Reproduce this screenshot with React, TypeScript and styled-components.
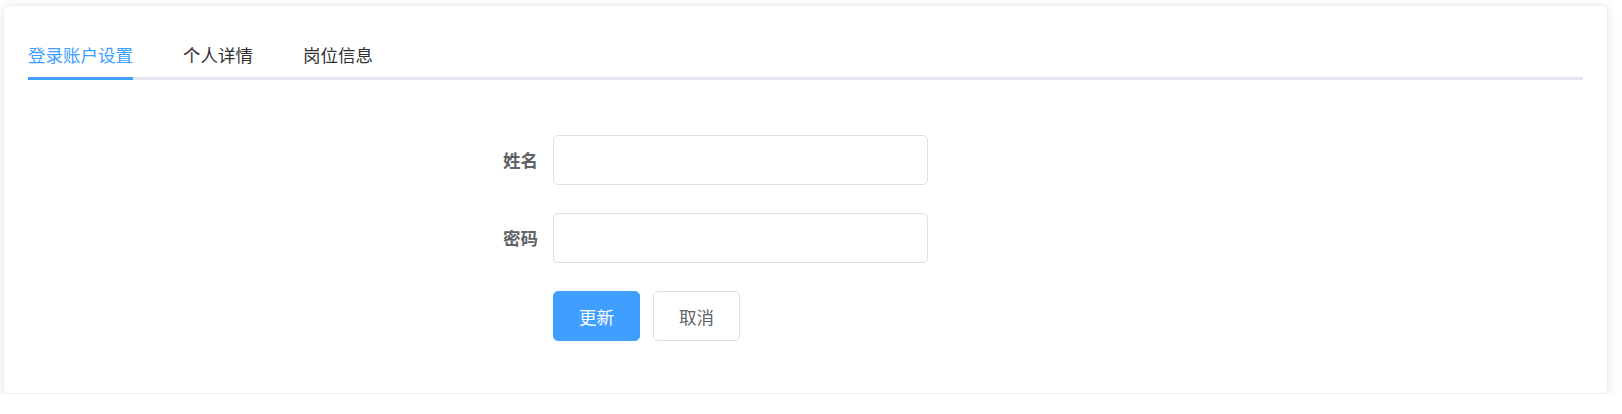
import React, { useState } from "react";
import styled, { createGlobalStyle } from "styled-components";

const Global = createGlobalStyle`
  html, body { margin: 0; padding: 0; background: #fff; }
  body { font-family: "Noto Sans CJK SC", "Noto Sans", "Liberation Sans", sans-serif; }
  * { box-sizing: border-box; }
`;

const Card = styled.div`
  margin: 5px 0 0 3px;
  width: 1605px;
  background: #fff;
  border: 1px solid #ebeef5;
  border-radius: 5px;
  box-shadow: 0 2px 12px 0 rgba(0, 0, 0, 0.1);
  padding: 24px;
`;

const TabHeader = styled.div`
  display: flex;
  height: 50px;
  border-bottom: 3px solid #e4e7ed;
`;

const Tab = styled.div<{ $active?: boolean; $first?: boolean }>`
  position: relative;
  height: 47px;
  line-height: 49px;
  padding: 0 25px;
  padding-left: ${(p) => (p.$first ? "0" : "25px")};
  font-size: 17.5px;
  color: ${(p) => (p.$active ? "#409eff" : "#303133")};
  cursor: pointer;
  white-space: nowrap;
  &::after {
    content: "";
    display: ${(p) => (p.$active ? "block" : "none")};
    position: absolute;
    left: ${(p) => (p.$first ? "0" : "25px")};
    right: 25px;
    bottom: -3px;
    height: 3px;
    background: #409eff;
  }
`;

const Form = styled.form`
  display: flex;
  flex-direction: column;
  gap: 28px;
  padding: 55px 0 28px 400px;
`;

const Row = styled.div`
  display: flex;
  align-items: center;
  height: 50px;
`;

const Label = styled.label`
  width: 125px;
  padding-right: 15px;
  text-align: right;
  font-size: 17.5px;
  font-weight: 700;
  color: #606266;
  line-height: 50px;
`;

const Input = styled.input`
  width: 375px;
  height: 50px;
  border: 1px solid #dcdfe6;
  border-radius: 5px;
  padding: 0 19px;
  font-size: 17.5px;
  color: #606266;
  outline: none;
  font-family: inherit;
`;

const Actions = styled.div`
  display: flex;
  gap: 13px;
  margin-left: 125px;
`;

const Button = styled.button<{ $primary?: boolean }>`
  width: 87px;
  height: 50px;
  border-radius: 5px;
  border: 1px solid ${(p) => (p.$primary ? "#409eff" : "#dcdfe6")};
  background: ${(p) => (p.$primary ? "#409eff" : "#fff")};
  color: ${(p) => (p.$primary ? "#fff" : "#606266")};
  font-size: 17.5px;
  font-family: inherit;
  cursor: pointer;
  padding: 0;
`;

export default function App() {
  const [active, setActive] = useState(0);
  const tabs = ["登录账户设置", "个人详情", "岗位信息"];
  return (
    <>
      <Global />
      <Card>
        <TabHeader>
          {tabs.map((t, i) => (
            <Tab key={t} $active={active === i} $first={i === 0} onClick={() => setActive(i)}>
              {t}
            </Tab>
          ))}
        </TabHeader>
        <Form onSubmit={(e) => e.preventDefault()}>
          <Row>
            <Label>姓名</Label>
            <Input type="text" />
          </Row>
          <Row>
            <Label>密码</Label>
            <Input type="password" />
          </Row>
          <Actions>
            <Button $primary type="submit">更新</Button>
            <Button type="button">取消</Button>
          </Actions>
        </Form>
      </Card>
    </>
  );
}
